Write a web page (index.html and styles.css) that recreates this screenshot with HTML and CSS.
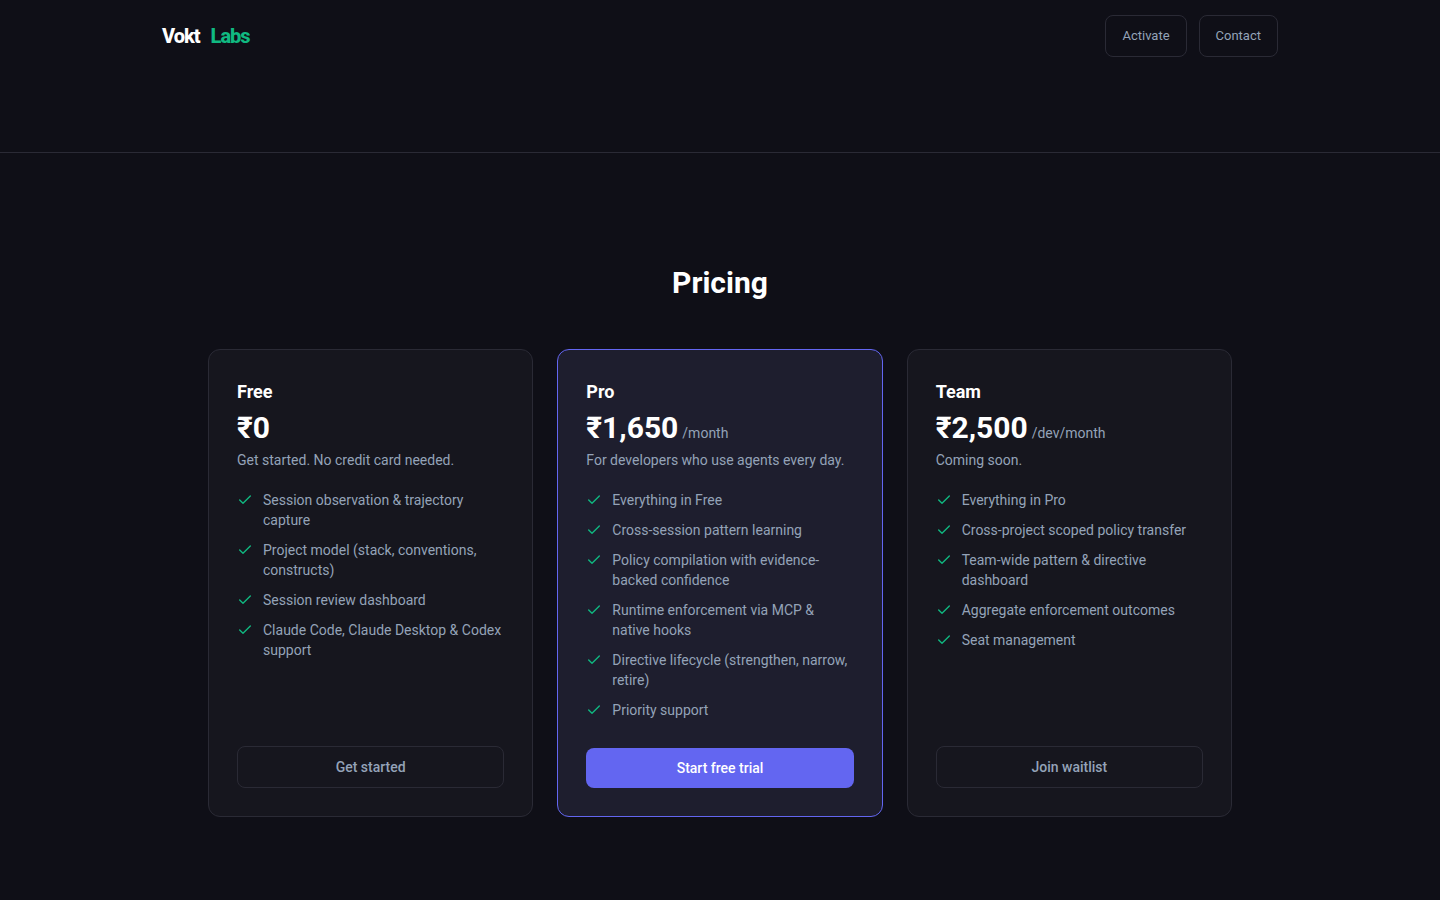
FILE: index.html
```html
<!DOCTYPE html>
<html lang="en">

<head>
  <meta charset="UTF-8">
  <meta name="viewport" content="width=device-width, initial-scale=1.0">
  <title>Vokt Labs - Pricing</title>
  <link rel="stylesheet" href="styles.css">
</head>

<body>
  <svg class="sprite" aria-hidden="true">
    <symbol id="check" viewBox="0 0 24 24">
      <path d="M20 6 9 17l-5-5" />
    </symbol>
  </svg>

  <header class="header">
    <a class="logo" href="#"><span>Vokt</span><span class="logo-accent">Labs</span></a>
    <nav class="nav">
      <a class="nav-link" href="#activate">Activate</a>
      <a class="nav-link" href="#contact">Contact</a>
    </nav>
  </header>

  <main>
    <section class="pricing">
      <h2 class="pricing-title">Pricing</h2>
      <div class="plans">
        <article class="plan">
          <h3 class="plan-name">Free</h3>
          <p class="price">₹0</p>
          <p class="plan-text">Get started. No credit card needed.</p>
          <ul class="features">
            <li><svg class="check"><use href="#check" /></svg><span>Session observation &amp; trajectory capture</span></li>
            <li><svg class="check"><use href="#check" /></svg><span>Project model (stack, conventions, constructs)</span></li>
            <li><svg class="check"><use href="#check" /></svg><span>Session review dashboard</span></li>
            <li><svg class="check"><use href="#check" /></svg><span>Claude Code, Claude Desktop &amp; Codex support</span></li>
          </ul>
          <button class="btn" type="button">Get started</button>
        </article>

        <article class="plan plan-pro">
          <h3 class="plan-name">Pro</h3>
          <p class="price">₹1,650<span class="period">/month</span></p>
          <p class="plan-text">For developers who use agents every day.</p>
          <ul class="features">
            <li><svg class="check"><use href="#check" /></svg><span>Everything in Free</span></li>
            <li><svg class="check"><use href="#check" /></svg><span>Cross-session pattern learning</span></li>
            <li><svg class="check"><use href="#check" /></svg><span>Policy compilation with evidence-backed confidence</span></li>
            <li><svg class="check"><use href="#check" /></svg><span>Runtime enforcement via MCP &amp; native hooks</span></li>
            <li><svg class="check"><use href="#check" /></svg><span>Directive lifecycle (strengthen, narrow, retire)</span></li>
            <li><svg class="check"><use href="#check" /></svg><span>Priority support</span></li>
          </ul>
          <button class="btn btn-primary" type="button">Start free trial</button>
        </article>

        <article class="plan">
          <h3 class="plan-name">Team</h3>
          <p class="price">₹2,500<span class="period">/dev/month</span></p>
          <p class="plan-text">Coming soon.</p>
          <ul class="features">
            <li><svg class="check"><use href="#check" /></svg><span>Everything in Pro</span></li>
            <li><svg class="check"><use href="#check" /></svg><span>Cross-project scoped policy transfer</span></li>
            <li><svg class="check"><use href="#check" /></svg><span>Team-wide pattern &amp; directive dashboard</span></li>
            <li><svg class="check"><use href="#check" /></svg><span>Aggregate enforcement outcomes</span></li>
            <li><svg class="check"><use href="#check" /></svg><span>Seat management</span></li>
          </ul>
          <button class="btn" type="button">Join waitlist</button>
        </article>
      </div>
    </section>
  </main>
</body>

</html>
```
FILE: styles.css
```css
*,
*::after,
*::before {
  box-sizing: border-box;
}

body,
h2,
h3,
p,
ul {
  margin: 0;
  padding: 0;
}

body {
  background-color: #0f0f17;
  color: #94a3b8;
  font-family: Roboto, "Liberation Sans", sans-serif;
  font-size: 14px;
  line-height: 20px;
}

a {
  color: inherit;
  text-decoration: none;
}

.sprite {
  display: none;
}

/* Header */
.header {
  display: flex;
  align-items: center;
  justify-content: space-between;
  max-width: 1180px;
  min-height: 72px;
  margin: 0 auto;
  padding: 0 32px;
}

.logo {
  display: flex;
  gap: 11px;
  color: #fff;
  font-size: 20px;
  font-weight: 800;
  line-height: 28px;
  letter-spacing: -1px;
}

.logo-accent {
  color: #10b981;
}

.nav {
  display: flex;
  gap: 12px;
}

.nav-link {
  padding: 10px 16px;
  border: 1px solid #2a2a35;
  border-radius: 8px;
  font-size: 13px;
}

/* Pricing */
.pricing {
  margin-top: 80px;
  padding: 112px 32px 80px;
  border-top: 1px solid #2a2a35;
}

.pricing-title {
  margin-bottom: 48px;
  color: #fff;
  font-size: 30px;
  font-weight: 700;
  line-height: 36px;
  text-align: center;
}

.plans {
  display: grid;
  grid-template-columns: repeat(3, 1fr);
  gap: 24px;
  max-width: 1024px;
  margin: 0 auto;
}

.plan {
  display: flex;
  flex-direction: column;
  padding: 28px;
  background-color: #16161e;
  border: 1px solid #2a2a35;
  border-radius: 12px;
}

.plan-pro {
  background-color: #1e1e2e;
  border-color: #6366f1;
}

.plan-name {
  color: #fff;
  font-size: 18px;
  font-weight: 700;
  line-height: 28px;
}

.price {
  margin: 4px 0;
  color: #fff;
  font-size: 30px;
  font-weight: 700;
  line-height: 36px;
}

.period {
  margin-left: 4px;
  color: #94a3b8;
  font-size: 14px;
  font-weight: 400;
  line-height: 20px;
}

.features {
  display: flex;
  flex: 1;
  flex-direction: column;
  gap: 10px;
  margin: 20px 0 28px;
  list-style: none;
}

.features li {
  display: flex;
  gap: 10px;
}

.check {
  flex: none;
  width: 16px;
  height: 16px;
  margin-top: 2px;
  fill: none;
  stroke: #10b981;
  stroke-width: 2;
  stroke-linecap: round;
  stroke-linejoin: round;
}

.btn {
  padding: 10px 16px;
  background-color: transparent;
  border: 1px solid #2a2a35;
  border-radius: 8px;
  color: #94a3b8;
  font: inherit;
  font-weight: 500;
  cursor: pointer;
}

.btn-primary {
  background-color: #6366f1;
  border: 0;
  color: #fff;
}

@media (max-width: 800px) {
  .plans {
    grid-template-columns: 1fr;
  }
}
```
